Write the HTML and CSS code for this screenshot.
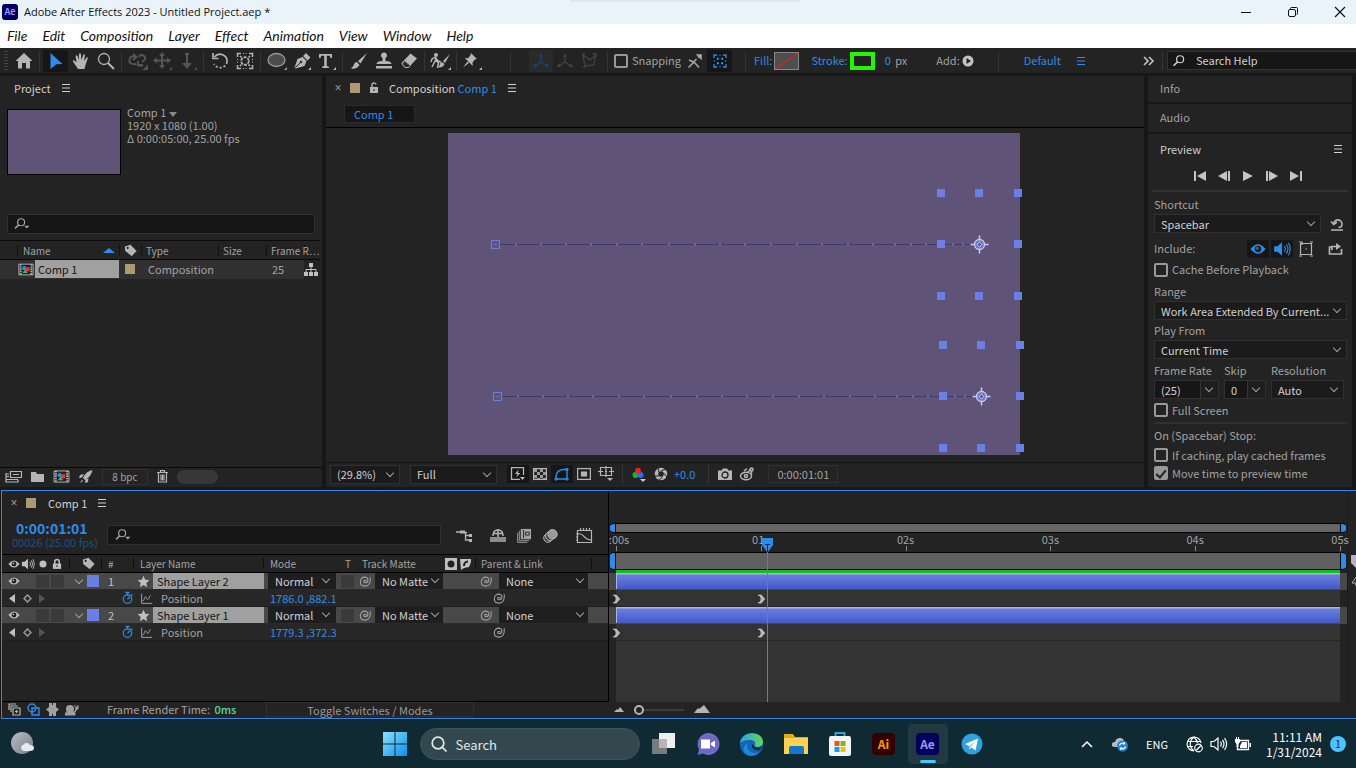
FILE: index.html
```html
<!DOCTYPE html>
<html lang="en">
<head>
<meta charset="utf-8">
<title>Adobe After Effects 2023 - Untitled Project.aep *</title>
<link rel="stylesheet" href="styles.css">
</head>
<body>
<svg class="sprite" aria-hidden="true">
  <symbol id="menu" viewBox="0 0 16 16"><path d="M4 4.500h8M4 8h8M4 11.500h8" stroke="currentColor" stroke-width="1.2"/></symbol>
  <symbol id="lens" viewBox="0 0 20 16"><circle cx="9" cy="6" r="4" fill="none" stroke="currentColor" stroke-width="1.4"/><path d="M6 9L1.500 13.500" stroke="currentColor" stroke-width="1.800"/></symbol>
  <symbol id="lensdrop" viewBox="0 0 20 16"><circle cx="9" cy="6" r="4" fill="none" stroke="currentColor" stroke-width="1.4"/><path d="M6.300 9L2 13" stroke="currentColor" stroke-width="1.600"/><path d="M12.500 10h6l-3 3z" fill="currentColor"/></symbol>
  <symbol id="eye" viewBox="0 0 16 16"><path d="M.5 8Q8-1.500 15.500 8 8 17.500.5 8z" fill="currentColor"/><circle cx="8" cy="8" r="3.300" fill="#222"/><circle cx="7.200" cy="7.200" r="1.100" fill="currentColor"/></symbol>
  <symbol id="sound" viewBox="0 0 16 16"><path d="M1 5.500h3l4-3.500v12l-4-3.500H1z" fill="currentColor"/><path d="M10 5.500q2 2.500 0 5M11.800 3.800q3 4.200 0 8.400M13.700 2.500q3.200 5.500 0 11" fill="none" stroke="currentColor"/></symbol>
  <symbol id="lock" viewBox="0 0 16 16"><path d="M2.500 7.500h11V14.500h-11z" fill="currentColor"/><path d="M5 8V5a3 3 0 0 1 6 0v3" fill="none" stroke="currentColor" stroke-width="2"/><path d="M8 9.500v2.500" stroke="#222" stroke-width="1.500"/></symbol>
  <symbol id="tag" viewBox="0 0 16 16"><path d="M1 3l7-2 7.500 7.500-6 6.500L1.500 8.500z" fill="currentColor"/><circle cx="4.500" cy="4.800" r="1.300" fill="#222"/></symbol>
  <symbol id="star" viewBox="0 0 16 16"><path d="M8 1l2.100 4.800 5.200.5-3.900 3.500 1.100 5.200L8 12.300 3.500 15l1.100-5.200L.7 6.300l5.200-.5z" fill="currentColor"/></symbol>
  <symbol id="whip" viewBox="0 0 16 16"><path d="M8.800 8a1.500 1.500 0 1 0-1.500 1.500c2.500 0 3.700-1.500 3.700-3.400S9.200 2.600 6.800 2.600 1.600 4.800 1.600 8.300s2.500 5.400 5.600 5.400c4.800 0 7.600-4.300 6.500-11" fill="none" stroke="currentColor" stroke-width="1.300"/></symbol>
  <symbol id="watch" viewBox="0 0 16 16"><circle cx="8" cy="9.300" r="5.200" fill="none" stroke="currentColor" stroke-width="1.500"/><path d="M5.500 1.200h5M8 1.500v3M12 3.500l2 2M8 9.500l3-3" stroke="currentColor" stroke-width="1.600"/></symbol>
  <symbol id="graph" viewBox="0 0 16 16"><path d="M2 2v12h13M3 11c3 0 2-6 4-5s1 4 3 3 1-4 3-5" fill="none" stroke="currentColor" stroke-width="1.200"/></symbol>
  <symbol id="comp" viewBox="0 0 18 14"><path d="M1 1h16v12H1z" fill="#222" stroke="#bbb"/><path d="M3 1v12M15 1v12" stroke="#bbb" stroke-width="2" stroke-dasharray="1.500 1"/><circle cx="7" cy="5.500" r="2.300" fill="#2d8ceb"/><path d="M8.500 4.500H13V9H8.500z" fill="#e23b36"/><path d="M8 7l3 4H5z" fill="#46b45a"/></symbol>
  <symbol id="key" viewBox="0 0 10 12"><path d="M0 1.500Q1.500 0 5 1l4.500 5L5 11q-3.500 1-5-.5 4-1 4-4.500T0 1.500z" fill="#b9b9b9"/></symbol>
  <symbol id="axis" viewBox="0 0 24 20"><path d="M12 3v8l-7 5M12 11l7 5" fill="none" stroke="currentColor" stroke-width="1.500"/><path d="M12 1l2.500 4h-5zM2 17.500l3-5 2.300 4zM22 17.500l-3-5-2.300 4z" fill="currentColor"/></symbol>
  <symbol id="film" viewBox="0 0 16 16"><path d="M4 1h11v11H4z" fill="currentColor"/><path d="M2.500 3v10.500H13M.7 5v10.300H11" fill="none" stroke="currentColor"/><path d="M7 2v9M9 4.500h4v3H9z" stroke="#222" fill="none"/></symbol>
</svg>

<header class="titlebar">
  <span class="ae-logo small">Ae</span>
  <h1>Adobe After Effects 2023 - Untitled Project.aep *</h1>
  <span class="title-shade"></span>
  <div class="window-buttons">
    <button aria-label="Minimize"><svg width="12" height="12"><path d="M1 6.500h10" stroke="#111"/></svg></button>
    <button aria-label="Restore"><svg width="12" height="12" fill="none" stroke="#111"><rect x="1.500" y="3.500" width="7" height="7" rx="1.500"/><path d="M3.500 3V2.500q0-1 1-1h5q1 0 1 1v5q0 1-1 1"/></svg></button>
    <button aria-label="Close"><svg width="12" height="12"><path d="M1 1l10 10M11 1L1 11" stroke="#111" stroke-width="1.200"/></svg></button>
  </div>
</header>

<nav class="menubar">
  <a href="#">File</a><a href="#">Edit</a><a href="#">Composition</a><a href="#">Layer</a><a href="#">Effect</a><a href="#">Animation</a><a href="#">View</a><a href="#">Window</a><a href="#">Help</a>
</nav>

<div class="toolbar">
  <span class="grip"></span>
  <button class="tool" aria-label="Home"><svg width="18" height="17"><path d="M9 1l8.500 8H15v7.500h-4V11H7v5.500H3V9H.5z" fill="#b5b5b5"/></svg></button>
  <i class="sep"></i>
  <button class="tool on" aria-label="Selection tool"><svg width="14" height="18"><path d="M1.500 1l12 11-6 .3L1.500 17z" fill="#2d8ceb"/></svg></button>
  <button class="tool" aria-label="Hand tool"><svg width="18" height="18"><path d="M6 17L2 11Q0 8.500 1.500 8l3 2.300L3.500 4Q4.500 2.500 5.500 4l1.300 4L7 2q1-1.500 2 0l.3 6L11.500 2.500q1.300-.8 1.500.8L12 9l2.500-3.500q1.500-.5 1.300.8L13.500 13 12.500 17z" fill="#b5b5b5"/></svg></button>
  <button class="tool" aria-label="Zoom tool"><svg width="18" height="18" fill="none" stroke="#b5b5b5"><circle cx="7" cy="7" r="5.500" stroke-width="1.300"/><path d="M11 11l6 6" stroke-width="2"/></svg></button>
  <i class="sep"></i>
  <button class="tool" aria-label="Orbit"><svg width="20" height="18" fill="none" stroke="#555" stroke-width="2"><path d="M8 12Q1 13 1.500 8T8 5M5 2l3.500 3L5 8M11 5q2-4 5-1t-2 6M15 13q-4 2-6-1M10 9v4h4M16 18h3v-3z"/></svg></button>
  <button class="tool" aria-label="Pan camera"><svg width="20" height="18"><path d="M9 1v15M1 8.500h16" stroke="#555" stroke-width="2"/><path d="M9 0l3 4H6zM9 17l3-4H6zM0 8.500l4-3v6zM18 8.500l-4-3v6zM16 18l3-3v3z" fill="#555"/></svg></button>
  <button class="tool" aria-label="Dolly"><svg width="20" height="18"><path d="M9 1v13M7 2h4" stroke="#555" stroke-width="2"/><path d="M4 11h10l-5 6zM16 18l3-3v3z" fill="#555"/></svg></button>
  <i class="sep"></i>
  <button class="tool" aria-label="Rotation tool"><svg width="18" height="18" fill="none" stroke="#b5b5b5"><path d="M3.500 5a7 7 0 0 1 12.500 5" stroke-width="1.700"/><path d="M16 10a7 7 0 0 1-13 2" stroke-width="1.700" stroke-dasharray="2 2"/><path d="M2 1v5.500h5.500" stroke-width="1.700"/></svg></button>
  <button class="tool" aria-label="Pan behind tool"><svg width="18" height="18" fill="none" stroke="#b5b5b5"><path d="M1.500 5V1.500H5M13 1.500h3.500V5M16.500 13v3.500H13M5 16.500H1.500V13" stroke-width="1.500"/><path d="M7 1.500h4M7 16.500h4M1.500 7v4M16.500 7v4" stroke-dasharray="1 1.500"/><circle cx="9" cy="9" r="3.800" stroke-dasharray="3 1" stroke-width="1.700"/><path d="M4 4l1.500 1.500M14 4l-1.500 1.500M4 14l1.500-1.500M14 14l-1.500-1.500" stroke-width="1.500"/></svg></button>
  <i class="sep"></i>
  <button class="tool" aria-label="Ellipse tool"><svg width="20" height="18"><ellipse cx="9.500" cy="8" rx="8.500" ry="6.500" fill="#4c4c4c" stroke="#999" stroke-width="1.300"/><path d="M17 18l3-3v3z" fill="#999"/></svg></button>
  <button class="tool" aria-label="Pen tool"><svg width="20" height="18"><path d="M2 17l3.500-10 5-2 4 4-2 5z" fill="#b5b5b5"/><path d="M11 4l3-3 4.500 4.500-3 3zM16 18l3-3v3z" fill="#b5b5b5"/><path d="M2 17l6-6" stroke="#232323"/><circle cx="9" cy="10" r="1.200" fill="#232323"/></svg></button>
  <button class="tool" aria-label="Type tool"><svg width="20" height="18"><path d="M2 2h13v4h-1.500l-.7-2.300H9.800V14l2 .5V16H5.200v-1.500l2-.5V3.700H4.200L3.500 6H2zM16 18l3-3v3z" fill="#b5b5b5"/></svg></button>
  <i class="sep"></i>
  <button class="tool" aria-label="Brush tool"><svg width="18" height="18" fill="#b5b5b5"><path d="M17 1L8 9l2.500 2.500zM7 10l2.500 3Q7 17.500 1 16.500 4 14.500 4 12q1-2 3-2z"/></svg></button>
  <button class="tool" aria-label="Clone stamp tool"><svg width="18" height="18" fill="#b5b5b5"><path d="M7.500 6a3 3 0 1 1 3 0L10.500 9q6 0 6 3h-15q0-3 6-3zM1 14h16v2.500H1z"/></svg></button>
  <button class="tool" aria-label="Eraser tool"><svg width="18" height="18"><path d="M1.500 11l9-9.500L17 6.500 8 16H5z" fill="#b5b5b5"/><path d="M4.500 8.500l6 5-2 2L5 15.500 2 12z" fill="#2a2a2a" stroke="#b5b5b5"/></svg></button>
  <i class="sep"></i>
  <button class="tool" aria-label="Roto brush tool"><svg width="21" height="18" fill="#b5b5b5"><circle cx="6" cy="3" r="2"/><path d="M5 5l3 4 3 1M5 5L2 7l-1 3M5.500 8l3 3-1 5M5 9l-3 6M5.500 5v5" fill="none" stroke="#b5b5b5" stroke-width="1.500"/><path d="M20 2l-7 7 2 2zM12 10l2.500 2Q13 16 8 15.500q2-2 2-4zM18 18l3-3v3z"/></svg></button>
  <i class="sep"></i>
  <button class="tool" aria-label="Puppet pin tool"><svg width="21" height="18" fill="#b5b5b5"><path d="M9 1l6 6-2 .5-2.500 3 .3 3.500-8-8 3.400.3L8.500 3zM5.500 9.500L1 15.500l6-4.500zM17 18l3-3v3z"/></svg></button>
  <i class="sep wide"></i>
  <span class="axes">
    <button class="tool axis-on" aria-label="Local axis"><svg width="20" height="18"><use href="#axis"/></svg></button>
    <button class="tool" aria-label="World axis"><svg width="20" height="18"><use href="#axis"/></svg></button>
    <button class="tool" aria-label="View axis"><svg width="16" height="16" fill="none" stroke="#444" stroke-width="1.300"><path d="M2 2l2 11 9-1 1-9-5 4zM1 1h3M12 1h3v3M2 14h3"/></svg></button>
  </span>
  <i class="sep"></i>
  <label class="check snap"><input type="checkbox"><span>Snapping</span></label>
  <button class="tool" aria-label="Snap edges"><svg width="16" height="16" fill="none" stroke="#aaa" stroke-width="1.500"><path d="M1.500 14.500L7 9l5 5.500M2 7l4.500 2L9.500 6M11 4.500l1-1"/><path d="M10.500 2h3.500v3.500z" fill="#aaa"/></svg></button>
  <button class="tool on" aria-label="Snap bounds"><svg width="14" height="14" fill="none" stroke="#2d8ceb" stroke-width="1.300"><path d="M1 4V1h3M10 1h3v3M13 10v3h-3M4 13H1v-3M4.500 6V4.500H6M8 4.500h1.500V6M9.500 8v1.500H8M6 9.500H4.500V8M7 1v1M7 12v1M1 7h1M12 7h1"/></svg></button>
  <i class="sep gap"></i>
  <a href="#" class="blue">Fill:</a>
  <button class="swatch none" aria-label="Fill colour"><svg width="23" height="16"><path d="M0 16L23 0" stroke="#d22" stroke-width="1.200"/></svg></button>
  <a href="#" class="blue stroke-link">Stroke:</a>
  <button class="swatch green" aria-label="Stroke colour"></button>
  <span class="px"><b>0</b> px</span>
  <span class="add">Add:</span>
  <button class="plain" aria-label="Add"><svg width="12" height="12"><circle cx="6" cy="6" r="5.500" fill="#c4c4c4"/><path d="M4.500 3L9 6 4.500 9z" fill="#222"/></svg></button>
  <i class="sep far"></i>
  <a href="#" class="blue default">Default</a>
  <button class="plain blue" aria-label="Workspace menu"><svg width="16" height="16"><use href="#menu"/></svg></button>
  <span class="grow"></span>
  <button class="plain more" aria-label="More workspaces"><svg width="12" height="10" fill="none" stroke="#c4c4c4" stroke-width="1.600"><path d="M1 1l4 4-4 4M6 1l4 4-4 4"/></svg></button>
  <i class="sep"></i>
  <label class="help-search"><svg width="18" height="14"><use href="#lens"/></svg><input type="text" value="Search Help" aria-label="Search Help"></label>
</div>

<main class="workspace">
  <section class="panel project">
    <div class="tabs"><span>Project</span><button class="plain" aria-label="Panel menu"><svg width="16" height="16"><use href="#menu"/></svg></button></div>
    <div class="asset">
      <div class="thumb"></div>
      <div class="facts"><strong>Comp 1 <i class="tri"></i></strong><span>1920 x 1080 (1.00)</span><span>Δ 0:00:05:00, 25.00 fps</span></div>
    </div>
    <label class="field project-search"><svg width="20" height="14"><use href="#lensdrop"/></svg><input type="text" aria-label="Search project"></label>
    <table class="files">
      <colgroup><col class="f-name"><col class="f-tag"><col class="f-type"><col class="f-size"><col class="f-rate"><col></colgroup>
      <thead><tr><th><div class="name-head">Name<i class="up"></i></div></th><th><svg class="tagico" width="13" height="13"><use href="#tag"/></svg></th><th>Type</th><th>Size</th><th>Frame R…</th><th></th></tr></thead>
      <tbody><tr><td><div class="file-name"><svg width="16" height="13"><use href="#comp"/></svg><span>Comp 1</span></div></td><td><i class="sand"></i></td><td class="wide-text">Composition</td><td></td><td class="rate">25</td><td class="tree"><svg width="14" height="13" fill="#c0c0c0"><path d="M5 0h4v4H5zM0 9h4v4H0zM5 9h4v4H5zM10 9h4v4h-4z"/><path d="M7 4v5M2 9V6.500h10V9" fill="none" stroke="#c0c0c0"/></svg></td></tr></tbody>
    </table>
    <div class="project-foot">
      <button class="plain" aria-label="Interpret footage"><svg width="17" height="13" fill="none" stroke="#b5b5b5" stroke-width="1.200"><path d="M5.500 1.500h11v6h-11zM8 4.500h6M1 3v9h12v-2.500" /><path d="M1 4h3M1 6.500h3M1 9.500h12" /></svg></button>
      <button class="plain" aria-label="New folder"><svg width="13" height="11"><path d="M0 1h5l1 2h7v8H0z" fill="#b5b5b5"/></svg></button>
      <button class="plain" aria-label="New composition"><svg width="17" height="13"><use href="#comp"/></svg></button>
      <button class="plain" aria-label="Project settings"><svg width="14" height="13"><path d="M13.500 0Q7 1 4 8l2 2q6-3 7.500-10zM5 4L1 5 0 8l3-.5zM9.500 8.500L9 12l-3 1 .5-3.500zM3 9.500L1 13l3-2z" fill="#b5b5b5"/></svg></button>
      <button class="bpc">8 bpc</button>
      <button class="plain" aria-label="Delete"><svg width="11" height="13" fill="none" stroke="#b5b5b5" stroke-width="1.200"><path d="M0 2.500h11M3.500 2V.6h4V2M1.500 3v9h8V3M4 4.500v6M5.500 4.500v6M7 4.500v6"/></svg></button>
      <span class="pill"></span>
    </div>
  </section>

  <section class="panel viewer">
    <div class="tabs">
      <button class="plain x" aria-label="Close tab">×</button><i class="sand"></i>
      <svg width="11" height="12"><path d="M1 5h8v6H1z" fill="#b5b5b5"/><path d="M3 5V3.500a2 2 0 0 1 4-1" fill="none" stroke="#b5b5b5" stroke-width="1.400"/><path d="M5 7v2" stroke="#232323"/></svg>
      <span>Composition <a href="#" class="blue">Comp 1</a></span>
      <button class="plain" aria-label="Panel menu"><svg width="16" height="16"><use href="#menu"/></svg></button>
    </div>
    <div class="crumbs"><button>Comp 1</button></div>
    <div class="stage">
      <svg class="canvas" width="572" height="322" viewBox="0 0 572 322" role="img" aria-label="Composition canvas">
        <defs>
          <g id="handles" fill="#6b7fe6"><path d="M-4-4h8v8h-8zM34-4h8v8h-8zM73-4h8v8h-8zM-4 47h8v8h-8zM73 47h8v8h-8zM-4 99h8v8h-8zM34 99h8v8h-8zM73 99h8v8h-8z"/></g>
          <g id="path" fill="none" stroke="#6b7fe6"><path d="M4 0H480" stroke="#3f3c6a"/><path d="M20 0h1M45 0h1M70 0h1M95 0h1M121 0h1M146 0h1M173 0h1M199 0h1M224 0h1M249 0h1M275 0h1M301 0h1M326 0h1M352 0h1M377 0h1M399 0h1M415 0h1M430 0h1M444 0h1M457 0h1M467 0h1" stroke="#8c98f0" stroke-width="2"/><path d="M-4-4h8v8h-8z"/><path d="M-1 0h2"/></g>
          <g id="anchor" fill="none" stroke="#c7cdf5"><circle r="5" stroke-width="1.300"/><circle r="2"/><path d="M0-9v5M0 9V4M-9 0h5M9 0H4" stroke-width="1.500"/><path d="M-3-3h6v6h-6z" stroke="#6b7fe6"/></g>
        </defs>
        <rect width="572" height="322" fill="#605378"/>
        <use href="#path" x="47.500" y="111.500"/><use href="#path" x="49.500" y="263.500"/>
        <use href="#handles" x="493" y="60"/><use href="#handles" x="495" y="212"/>
        <use href="#anchor" x="531.500" y="111.500"/><use href="#anchor" x="533.500" y="263.500"/>
      </svg>
    </div>
    <div class="viewer-foot">
      <span class="pick zoompick"><select aria-label="Magnification"><option>(29.8%)</option></select></span>
      <span class="pick fullpick"><select aria-label="Resolution"><option>Full</option></select></span>
      <div class="view-icons">
        <button class="mini on" aria-label="Fast previews"><svg width="16" height="16" fill="none" stroke="#b5b5b5" stroke-width="1.300"><path d="M10 13.300H1.500V1.700h12V9"/><path d="M8.500 3.500L5 8h2.500L6 11.500 10.500 7H8zM10 11h5l-2.500 3z" fill="#b5b5b5" stroke="none"/></svg></button>
        <button class="mini" aria-label="Transparency grid"><svg width="14" height="12"><rect x=".6" y=".6" width="12.800" height="10.800" fill="none" stroke="#b5b5b5" stroke-width="1.200"/><path d="M1 1h3v3H1zM7 1h3v3H7zM4 4h3v3H4zM10 4h3v3h-3zM1 7h3v3H1zM7 7h3v3H7zM4 10h3v1H4zM10 10h3v1h-3z" fill="#999"/></svg></button>
        <button class="mini on" aria-label="Mask visibility"><svg width="16" height="14" fill="none" stroke="#2d8ceb" stroke-width="1.400"><path d="M2 12V9Q3 3 9 2.500h4V12z"/><path d="M1 11h2v2H1zM12 11h2v2h-2zM12 1.500h2v2h-2z" stroke-width="1"/></svg></button>
        <button class="mini" aria-label="Region of interest"><svg width="14" height="12"><rect x=".6" y=".6" width="12.800" height="10.800" fill="none" stroke="#b5b5b5" stroke-width="1.200"/><path d="M4 3.500h6v5H4z" fill="#b5b5b5"/></svg></button>
        <button class="mini" aria-label="Guides"><svg width="16" height="16" fill="none" stroke="#b5b5b5" stroke-width="1.200"><path d="M2.500 1.500h11v8h-11zM8 0v11M0 5.500h5M7 5.500h2M11 5.500h5"/><path d="M9 12h6l-3 3z" fill="#b5b5b5" stroke="none"/></svg></button>
      </div>
      <i class="sep"></i>
      <div class="view-icons second">
        <button class="mini" aria-label="Channels"><svg width="16" height="16"><circle cx="4.500" cy="9" r="3" fill="#1b2"/><circle cx="9.500" cy="9" r="3" fill="#36f"/><circle cx="7" cy="4.800" r="3" fill="#e22"/><path d="M9 13h6l-3 3z" fill="#ccc"/></svg></button>
        <button class="mini" aria-label="Reset exposure"><svg width="14" height="14"><circle cx="7" cy="7" r="4.500" fill="none" stroke="#b5b5b5" stroke-width="3.500"/><path d="M7 4l5-2M9.500 6l3.500 4M8.500 10L5 13M5 9L1 9M5 5L4 1" stroke="#232323"/></svg></button>
        <a href="#" class="blue">+0.0</a>
      </div>
      <i class="sep"></i>
      <div class="view-icons third">
        <button class="mini" aria-label="Snapshot"><svg width="14" height="12"><path d="M0 2.500h3.500L5 .5h4l1.500 2H14V12H0z" fill="#b5b5b5"/><circle cx="7" cy="7" r="3" fill="none" stroke="#232323" stroke-width="1.300"/></svg></button>
        <button class="mini" aria-label="Show snapshot"><svg width="16" height="14" fill="none" stroke="#b5b5b5" stroke-width="1.500"><ellipse cx="7" cy="9" rx="5.500" ry="3.700"/><circle cx="7" cy="9" r="1.500"/><path d="M5 4l3-2.500M9 5l3-3M12.500 7V4"/><circle cx="12.500" cy="2.500" r="1.500"/></svg></button>
      </div>
      <button class="timecode">0:00:01:01</button>
    </div>
  </section>

  <section class="panel side">
    <h2 class="fold">Info</h2>
    <h2 class="fold">Audio</h2>
    <div class="tabs"><span>Preview</span><button class="plain" aria-label="Panel menu"><svg width="16" height="16"><use href="#menu"/></svg></button></div>
    <div class="transport">
      <button class="plain" aria-label="First frame"><svg width="12" height="10" fill="#c4c4c4"><path d="M0 0h2v10H0zM12 0v10L3 5z"/></svg></button>
      <button class="plain" aria-label="Previous frame"><svg width="12" height="10" fill="#c4c4c4"><path d="M10 0h2v10h-2zM9 0v10L0 5z"/></svg></button>
      <button class="plain" aria-label="Play"><svg width="12" height="10" fill="#c4c4c4"><path d="M1 0v10l10-5z"/></svg></button>
      <button class="plain" aria-label="Next frame"><svg width="12" height="10" fill="#c4c4c4"><path d="M0 0h2v10H0zM3 0v10l9-5z"/></svg></button>
      <button class="plain" aria-label="Last frame"><svg width="12" height="10" fill="#c4c4c4"><path d="M10 0h2v10h-2zM0 0v10l9-5z"/></svg></button>
    </div>
    <div class="form">
      <label for="shortcut">Shortcut</label>
      <div class="line"><span class="pick"><select id="shortcut"><option>Spacebar</option></select></span><button class="plain end" aria-label="Reset"><svg width="14" height="14" fill="none" stroke="#b5b5b5" stroke-width="1.600"><path d="M8.500 10.300h2a4.200 4.200 0 1 0-6.800-4M1 4.500l2.700 3L7 5M1 13h12"/></svg></button></div>
      <div class="line include"><span>Include:</span><button class="mini on blue" aria-label="Video"><svg width="16" height="16"><use href="#eye"/></svg></button><button class="mini on blue" aria-label="Audio"><svg width="18" height="18"><use href="#sound"/></svg></button><button class="mini" aria-label="Overlays"><svg width="16" height="16" fill="none" stroke="#b5b5b5" stroke-width="1.200"><path d="M2.500 2.500h11v11h-11zM7.500 8h1.500M1 1h3v3M12 1h3M1 15h3M12 15h3"/></svg></button><button class="mini loop" aria-label="Loop"><svg width="16" height="14" fill="none" stroke="#b5b5b5" stroke-width="1.700"><path d="M4 5H1.500v7h12V7M4 8V4.500h5"/><path d="M8 1l5 3.500L8 8z" fill="#b5b5b5" stroke="none"/></svg></button></div>
      <label class="check cache"><input type="checkbox"><span>Cache Before Playback</span></label>
      <label for="range" class="range-label">Range</label>
      <div class="line"><span class="pick"><select id="range"><option>Work Area Extended By Current...</option></select></span></div>
      <label for="from" class="from-label">Play From</label>
      <div class="line"><span class="pick"><select id="from"><option>Current Time</option></select></span></div>
      <div class="trio">
        <label for="rate">Frame Rate</label><label for="skip">Skip</label><label for="res">Resolution</label>
        <span class="pick split"><select id="rate"><option>(25)</option></select></span><span class="pick split"><select id="skip"><option>0</option></select></span><span class="pick"><select id="res"><option>Auto</option></select></span>
      </div>
      <label class="check full"><input type="checkbox"><span>Full Screen</span></label>
      <hr>
      <p>On (Spacebar) Stop:</p>
      <label class="check"><input type="checkbox"><span>If caching, play cached frames</span></label>
      <label class="check"><input type="checkbox" checked><span>Move time to preview time</span></label>
    </div>
  </section>
</main>

<section class="timeline">
  <div class="tl-left">
    <div class="tabs"><button class="plain x" aria-label="Close tab">×</button><i class="sand"></i><span>Comp 1</span><button class="plain" aria-label="Panel menu"><svg width="16" height="16"><use href="#menu"/></svg></button></div>
    <div class="tl-tools">
      <div class="now"><strong>0:00:01:01</strong><span>00026 (25.00 fps)</span></div>
      <label class="field tl-search"><svg width="20" height="14"><use href="#lensdrop"/></svg><input type="text" aria-label="Search layers"></label>
      <div class="switches">
        <button class="plain" aria-label="Mini flowchart"><svg width="17" height="14" fill="none" stroke="#b5b5b5" stroke-width="1.300"><path d="M0 3h7M8 3.500h3M9.500 3.500V11h5M10 6.500h5"/><path d="M4 1.500h5v3H4zM13 5h3v3h-3zM13 10h3v3h-3z" fill="#b5b5b5" stroke="none"/></svg></button>
        <button class="plain" aria-label="Hide shy layers"><svg width="16" height="14"><path d="M3 7q0-6 5-6t5 6M8 0v8M4 4.500h8" fill="none" stroke="#b5b5b5" stroke-width="1.500"/><path d="M0 8h16v5H0z" fill="#8c8c8c"/></svg></button>
        <button class="plain" aria-label="Frame blending"><svg width="15" height="15"><use href="#film"/></svg></button>
        <button class="plain" aria-label="Motion blur"><svg width="15" height="14" fill="#444" stroke="#b5b5b5"><circle cx="5" cy="9" r="4.300"/><circle cx="7" cy="7" r="4.500"/><circle cx="9.500" cy="5.300" r="4.700" fill="#999"/></svg></button>
        <button class="plain graphbtn" aria-label="Graph editor"><svg width="17" height="16" fill="none" stroke="#b5b5b5" stroke-width="1.200"><path d="M1.500 2.500h14v12h-14zM2 6c6-2 5 6 13 6M4.500 0v2M7.500 0v2M10.500 0v2M13.500 0v2M0 6h2M0 9h2M0 12h2"/></svg></button>
      </div>
    </div>
    <table class="layers">
      <colgroup><col class="c-av"><col class="c-tag"><col class="c-num"><col class="c-name"><col class="c-mode"><col class="c-t"><col class="c-matte"><col class="c-mask"><col class="c-parent"><col></colgroup>
      <thead><tr>
        <th><div class="av"><svg width="12" height="12"><use href="#eye"/></svg><svg width="14" height="14"><use href="#sound"/></svg><svg width="12" height="12"><circle cx="6" cy="6" r="3.500" fill="currentColor"/></svg><svg width="12" height="12"><use href="#lock"/></svg></div></th>
        <th><svg class="tagico" width="13" height="13"><use href="#tag"/></svg></th><th>#</th><th>Layer Name</th><th>Mode</th><th>T</th><th>Track Matte</th>
        <th><div class="masks"><svg width="12" height="12"><path d="M0 0h12v12H0z" fill="#c0c0c0"/><circle cx="6" cy="6" r="3.500" fill="#222"/></svg><svg width="12" height="12"><path d="M0 1h11v3L9 9l-5 1-3 2z" fill="#c0c0c0"/><path d="M4 8Q4 4 8 3.500" stroke="#222" stroke-width="2" fill="none"/></svg></div></th><th>Parent &amp; Link</th><th></th>
      </tr></thead>
      <tbody>
        <tr class="layer">
          <td><div class="av"><svg width="12" height="12"><use href="#eye"/></svg><i></i><i class="cell"></i><i class="cell"></i></div></td>
          <td><div class="color"><i class="chev"></i><i class="chip"></i></div></td><td>1</td>
          <td><div class="lname"><svg width="13" height="13"><use href="#star"/></svg><span>Shape Layer 2</span></div></td>
          <td><span class="pick"><select aria-label="Mode"><option>Normal</option></select></span></td><td><i class="cell"></i></td>
          <td><div class="link"><svg width="13" height="13"><use href="#whip"/></svg><span class="pick"><select aria-label="Track matte"><option>No Matte</option></select></span></div></td><td></td>
          <td colspan="2"><div class="link parent"><svg width="13" height="13"><use href="#whip"/></svg><span class="pick"><select aria-label="Parent"><option>None</option></select></span></div></td>
        </tr>
        <tr class="prop">
          <td colspan="3"><div class="nav"><svg width="7" height="9"><path d="M6 0v9L0 4.500z" fill="#c0c0c0"/></svg><svg width="9" height="9"><path d="M4.500 1L8 4.500 4.500 8 1 4.500z" fill="none" stroke="#999" stroke-width="1.500"/></svg><svg width="7" height="9"><path d="M0 0v9l6-4.500z" fill="#555"/></svg><svg class="blue sw" width="13" height="14"><use href="#watch"/></svg></div></td>
          <td><div class="pname"><svg width="13" height="13"><use href="#graph"/></svg><span>Position</span></div></td>
          <td colspan="4"><a href="#" class="blue">1786.0 ,882.1</a></td>
          <td colspan="2"><svg class="pw" width="13" height="13"><use href="#whip"/></svg></td>
        </tr>
        <tr class="layer">
          <td><div class="av"><svg width="12" height="12"><use href="#eye"/></svg><i></i><i class="cell"></i><i class="cell"></i></div></td>
          <td><div class="color"><i class="chev"></i><i class="chip"></i></div></td><td>2</td>
          <td><div class="lname"><svg width="13" height="13"><use href="#star"/></svg><span>Shape Layer 1</span></div></td>
          <td><span class="pick"><select aria-label="Mode"><option>Normal</option></select></span></td><td><i class="cell"></i></td>
          <td><div class="link"><svg width="13" height="13"><use href="#whip"/></svg><span class="pick"><select aria-label="Track matte"><option>No Matte</option></select></span></div></td><td></td>
          <td colspan="2"><div class="link parent"><svg width="13" height="13"><use href="#whip"/></svg><span class="pick"><select aria-label="Parent"><option>None</option></select></span></div></td>
        </tr>
        <tr class="prop">
          <td colspan="3"><div class="nav"><svg width="7" height="9"><path d="M6 0v9L0 4.500z" fill="#c0c0c0"/></svg><svg width="9" height="9"><path d="M4.500 1L8 4.500 4.500 8 1 4.500z" fill="none" stroke="#999" stroke-width="1.500"/></svg><svg width="7" height="9"><path d="M0 0v9l6-4.500z" fill="#555"/></svg><svg class="blue sw" width="13" height="14"><use href="#watch"/></svg></div></td>
          <td><div class="pname"><svg width="13" height="13"><use href="#graph"/></svg><span>Position</span></div></td>
          <td colspan="4"><a href="#" class="blue">1779.3 ,372.3</a></td>
          <td colspan="2"><svg class="pw" width="13" height="13"><use href="#whip"/></svg></td>
        </tr>
      </tbody>
    </table>
  </div>

  <div class="tl-right">
    <div class="navigator"><span></span></div>
    <div class="ruler"><div class="scale">
      <span style="left:0%"><em>0:00s</em></span><span style="left:20%"><em>01s</em></span><span style="left:40%"><em>02s</em></span><span style="left:60%"><em>03s</em></span><span style="left:80%"><em>04s</em></span><span style="left:100%"><em>05s</em></span>
    </div></div>
    <div class="workarea"><span></span></div>
    <div class="cached"><span></span></div>
    <div class="lanes">
      <div class="lane bar"><span></span></div>
      <div class="lane keys"><span><svg style="left:0%" width="9" height="10"><use href="#key"/></svg><svg style="left:20%" width="9" height="10"><use href="#key"/></svg></span></div>
      <div class="lane bar"><span></span></div>
      <div class="lane keys"><span><svg style="left:0%" width="9" height="10"><use href="#key"/></svg><svg style="left:20%" width="9" height="10"><use href="#key"/></svg></span></div>
      <div class="empty"><span></span></div>
    </div>
    <div class="overlay"><div class="playhead" style="left:20.8%"><svg width="13" height="14"><path d="M1 0h11v7l-5 7h-1L1 7z" fill="#2d8ceb"/><path d="M4 6.500h5M6.500 7v7" stroke="#123"/></svg></div></div>
  </div>
  <div class="tl-edge"><svg width="6" height="14"><path d="M0 0h6v14L0 8z" fill="#b5b5b5"/></svg><svg width="6" height="14" fill="none" stroke="#b5b5b5"><path d="M6 1L1 8h3M6 6a4 4 0 0 0 0 6"/></svg></div>

  <footer class="tl-foot">
    <button class="plain" aria-label="Layer switches"><svg width="13" height="13" fill="none" stroke="#b5b5b5" stroke-width="1.200"><path d="M5 5h7v7H5zM3 9V3h7M1 7V1h7M8.500 7v3M7 8.500h3"/></svg></button>
    <button class="plain" aria-label="Transfer controls"><svg width="13" height="13" fill="none" stroke="#2d8ceb" stroke-width="1.400"><circle cx="5" cy="5" r="4"/><path d="M5 5h7v7H5z"/></svg></button>
    <button class="plain" aria-label="In and out"><svg width="13" height="13"><path d="M3 0h3v2h1V0h3v13H7v-2H6v2H3zM0 6.500L3 4v5zM13 6.500L10 4v5z" fill="#a0a0a0"/></svg></button>
    <button class="plain" aria-label="Render time"><svg width="14" height="12"><circle cx="5" cy="5" r="4" fill="#a0a0a0"/><path d="M1 8h8q2-1 2-5h2v2h-1L9 9.500M0 9h10v2H0zM10 1v2M13 1v2" fill="#a0a0a0" stroke="#a0a0a0"/></svg></button>
    <span class="render">Frame Render Time: <b>0ms</b></span>
    <button class="toggle">Toggle Switches / Modes</button>
    <span class="zoom"><svg width="10" height="7"><path d="M0 6l3-3 1 1 2-3 4 5z" fill="#b5b5b5"/></svg><input type="range" min="0" max="100" value="0" aria-label="Timeline zoom"><svg width="16" height="9"><path d="M0 8l4-5 1 1 5-4 6 8z" fill="#b5b5b5"/></svg></span>
  </footer>
</section>

<footer class="taskbar">
  <button class="task weather" aria-label="Weather"><svg width="26" height="26"><defs><linearGradient id="moon" y2="1"><stop stop-color="#b9bdc7"/><stop offset="1" stop-color="#777d88"/></linearGradient></defs><circle cx="13" cy="12" r="11" fill="url(#moon)"/><path d="M13 19a3 3 0 0 1 1-5 4 4 0 0 1 7 0q4 0 4 3t-4 3h-6z" fill="#e8eaf0"/></svg></button>
  <div class="apps">
    <button class="task" aria-label="Start"><svg width="24" height="24"><defs><linearGradient id="win" x2="1" y2="1"><stop stop-color="#8fe0fb"/><stop offset="1" stop-color="#0a91ee"/></linearGradient></defs><path d="M0 0h11.500v11.500H0zM12.500 0H24v11.500H12.500zM0 12.500h11.500V24H0zM12.500 12.500H24V24H12.500z" fill="url(#win)"/></svg></button>
    <label class="win-search"><svg width="16" height="16" fill="none" stroke="#e4e8ea" stroke-width="1.700"><circle cx="7" cy="7" r="5.800"/><path d="M11 11l4.500 4.500"/></svg><input type="text" value="Search" aria-label="Search"></label>
    <button class="task" aria-label="Task view"><svg width="25" height="24"><path d="M8 1h16v15H8z" fill="#eee"/><path d="M1 7h15v15H1z" fill="#767b80"/><path d="M8 7h8v9H8z" fill="#b5b5b5"/></svg></button>
    <button class="task" aria-label="Chat"><svg width="24" height="24"><path d="M12 1a11 11 0 1 1-5 20.500L1.500 23 3 17.500A11 11 0 0 1 12 1z" fill="#6f69c6"/><path d="M5 7.500h9v9H5zM15 11l4-2.500v7L15 13z" fill="#fff"/></svg></button>
    <button class="task" aria-label="Edge"><svg width="25" height="25"><defs><linearGradient id="edge" x2="1"><stop stop-color="#2aa4e2"/><stop offset="1" stop-color="#5fd65c"/></linearGradient></defs><circle cx="12.500" cy="12.500" r="11.500" fill="#1065b4"/><path d="M1 12C1-2 24-2 24 10c0 5-6 6-8.500 4 2-3 0-6-4-6C6 8 2 9 1 12z" fill="url(#edge)"/><path d="M9 11c-3 7 4 12 11 9-3 4-9 5-13 2-4-4-3-9 2-11z" fill="#1b8bd6"/><path d="M15 14q3 3 8 0-1 5-6 4-5-1-4-6z" fill="#102a33"/></svg></button>
    <button class="task" aria-label="File Explorer"><svg width="26" height="24"><path d="M1 2h9l2 3h13v17H1z" fill="#e5a91f"/><path d="M1 6h24v16H1z" fill="#fcd255"/><path d="M6 22v-6q0-2 2-2h11q2 0 2 2v6z" fill="#1578cc"/></svg></button>
    <button class="task" aria-label="Store"><svg width="24" height="26"><path d="M7.500 6V2h9v4" fill="none" stroke="#25a5e0" stroke-width="2"/><rect x="1" y="5" width="22" height="20" rx="2" fill="#f3f5f7"/><path d="M6.500 10h5v5h-5z" fill="#f25022"/><path d="M12.500 10h5v5h-5z" fill="#7fba00"/><path d="M6.500 16h5v5h-5z" fill="#00a4ef"/><path d="M12.500 16h5v5h-5z" fill="#ffb900"/></svg></button>
    <button class="task" aria-label="Illustrator"><span class="ai-logo">Ai</span></button>
    <button class="task active" aria-label="After Effects"><span class="ae-logo">Ae</span></button>
    <button class="task" aria-label="Telegram"><svg width="22" height="22"><circle cx="11" cy="11" r="10.500" fill="#2fa1de"/><path d="M4 11l13-5.500-2.500 12-4-3-2 2-.5-3.500z" fill="#fff"/><path d="M8 13l6-4.500-4 5.500-1.500 2z" fill="#9cc9e6"/></svg></button>
  </div>
  <div class="tray">
    <svg class="caret" width="12" height="8" fill="none" stroke="#fff" stroke-width="1.500"><path d="M1 7l5-5 5 5"/></svg>
    <svg class="cloud" width="18" height="16"><path d="M4 11Q0 11 1 8q0-2 3-2 1-4 5-4t4 4q3 1 2 5z" fill="#b4bcc2"/><circle cx="11.500" cy="10" r="5.500" fill="#1784d8"/><path d="M8.500 9.500a3 3 0 0 1 5-1.500M14.500 10.500a3 3 0 0 1-5 1.500M13.500 6v2h-2M9.500 14v-2h2" fill="none" stroke="#fff" stroke-width="1.200"/></svg>
    <span class="lang">ENG</span>
    <span class="status">
    <svg width="18" height="17" fill="none" stroke="#fff" stroke-width="1.200"><path d="M15 7A7 7 0 1 0 8 15M8 1C3 5 3 11 8 15M8 1q3 3 3.500 6M1.500 5.500h13M1.500 10.500H7"/><circle cx="12.500" cy="12" r="3.800"/><path d="M10 14.500l5-5"/></svg>
    <svg width="18" height="16" fill="none" stroke="#fff" stroke-width="1.200"><path d="M1 5.500h3L8 2v12l-4-3.500H1zM10.500 5.500q1.700 2.500 0 5M12.500 3.800q3 4.200 0 8.400M14.500 2q4.300 6 0 12"/></svg>
    <svg width="18" height="15"><path d="M6 3.500h8.500v9h-11V9" fill="none" stroke="#fff" stroke-width="1.300"/><path d="M8 5h5v6H6V9zM15.500 6H17v4h-1.500zM1 2h1V0h1v2h1V0h1v2h1v3L4.500 7v3h-2V7L1 5z" fill="#fff"/></svg>
    </span>
    <time>11:11 AM<br>1/31/2024</time><span class="badge">1</span>
  </div>
</footer>
</body>
</html>
```
FILE: styles.css
```css
*, *::before, *::after { box-sizing: border-box; }
:root {
  --bg: #232323; --dark: #171717; --line: #0b0b0b; --edge: #333;
  --text: #a2a2a2; --bright: #d0d0d0; --blue: #2d8ceb;
}
html, body { margin: 0; min-height: 100%; }
body {
  display: flex; flex-direction: column; min-height: 100vh;
  background: var(--dark); color: var(--text);
  font: 11px/13px "Noto Sans CJK SC", "Noto Sans", sans-serif;
}
button, input, select { font: inherit; color: inherit; background: none; border: 0; padding: 0; margin: 0; border-radius: 0; }
input[type=text] { flex: 1; min-width: 0; width: 100%; outline: 0; }
a { color: inherit; text-decoration: none; }
svg { display: block; flex: none; }
i { font-style: normal; }
.sprite { position: absolute; width: 0; height: 0; }
.blue { color: var(--blue); }
.grow { flex: 1; }
.plain, .mini { display: flex; align-items: center; justify-content: center; flex: none; }
.sand { display: block; width: 10px; height: 10px; background: #ad9a74; flex: none; }

/* Title bar and menus */
.titlebar { display: flex; align-items: center; height: 24px; padding-left: 2px; background: #ebf3fa; color: #111; position: relative; }
.titlebar h1 { margin: 0 0 0 6px; font: 400 11px/16px "Open Sans", "Noto Sans", sans-serif; }
.title-shade { position: absolute; top: 0; left: 42%; right: 41%; height: 2px; background: #dfe6ee; }
.window-buttons { display: flex; margin-left: auto; }
.window-buttons button { display: flex; justify-content: center; width: 47px; }
.window-buttons button:last-child { padding-right: 15px; width: 63px; }
.window-buttons button:last-child { padding-right: 0; width: 33px; margin-left: 8px; }
.window-buttons button:nth-child(2) { margin-right: -1px; }
.ae-logo, .ai-logo { display: flex; align-items: center; justify-content: center; width: 23px; height: 22px; border-radius: 4px; background: #00005b; color: #9999ff; font: 700 12px/14px "Noto Sans CJK SC", sans-serif; }
.ai-logo { background: #330000; color: #ff9a00; }
.ae-logo.small { width: 16px; height: 16px; border-radius: 3px; font-size: 9px; }
.menubar { display: flex; align-items: center; gap: 15px; height: 24px; padding-left: 7px; background: #fff; color: #111; font: italic 14px/20px "Segoe Print", "Ink Free", Lato, sans-serif; }

/* Toolbar */
.toolbar { display: flex; align-items: center; height: 27px; background: var(--bg); border-bottom: 2px solid var(--dark); }
.grip { width: 4px; height: 20px; margin: 0 3px 0 4px; background: repeating-linear-gradient(#444 0 1px, transparent 1px 3px); }
.tool { display: flex; align-items: center; justify-content: center; width: 25px; height: 22px; flex: none; }
.tool.on, .mini.on { background: #161616; }
.sep { width: 7px; height: 20px; flex: none; background: linear-gradient(90deg, transparent 3px, #353535 3px 4px, transparent 4px); }
.sep.wide { margin: 0 15px 0 22px; }
.sep.gap { margin: 0 5px 0 10px; }
.sep.far { margin-left: 21px; }
.axes { display: flex; color: #444; padding-right: 3px; }
.axes .tool { width: 24px; }
.axes .axis-on { color: #1e4268; background: #2a2a2a; }
.check { display: flex; align-items: center; gap: 4px; }
.check input { appearance: none; width: 14px; height: 14px; border: 2px solid #999; border-radius: 2px; flex: none; display: grid; place-items: center; }
.check input:checked { background: #999; }
.check input:checked::before { content: ""; width: 6px; height: 10px; margin-bottom: 2px; border: solid #222; border-width: 0 2px 2px 0; transform: rotate(40deg); }
.snap { margin: 0 1px 0 3px; }
.swatch { width: 25px; height: 18px; margin-left: 2px; border: 1px solid #888; background: #4e4e4e; }
.swatch.green { border: 4px solid #22f600; background: #222; }
.stroke-link { margin-left: 12px; }
.px { margin-left: 10px; }
.px b { font-weight: 400; color: var(--blue); margin-right: 2px; }
.add { margin: 0 2px 0 29px; }
.default { margin: 0 12px 0 22px; }
.more { margin-right: 4px; }
.help-search { display: flex; align-items: center; gap: 6px; width: 189px; height: 19px; margin-left: 1px; padding-left: 4px; background: #161616; border: 1px solid var(--edge); border-right: 0; color: var(--bright); }

/* Panels */
.workspace { display: grid; grid-template-columns: 322px minmax(0, 1fr) 204px; gap: 4px; flex: 1; padding: 1px 4px 3px 0; }
.panel { display: flex; flex-direction: column; background: var(--bg); min-width: 0; }
.tabs { display: flex; align-items: center; gap: 7px; height: 26px; padding: 0 0 2px 14px; color: var(--bright); flex: none; }
.x { width: 10px; font: 12px/13px "Liberation Sans", sans-serif; color: #999; }
.asset { display: flex; gap: 6px; padding: 4px 0 0 7px; }
.thumb { width: 114px; height: 66px; margin-top: 3px; border: 1px solid #000; background: #605378; }
.facts { display: flex; flex-direction: column; line-height: 13px; }
.facts strong { font-weight: 400; }
.tri { display: inline-block; border: solid transparent; border-width: 5px 4px 0; border-top-color: #888; vertical-align: middle; }
.field { display: flex; align-items: center; height: 20px; background: #161616; border: 1px solid #303030; }
.project-search { margin: 39px 7px 6px; padding-left: 4px; }
.files { width: 320px; table-layout: fixed; border-collapse: collapse; border-top: 1px solid var(--line); }
.files th, .files td { height: 19px; padding: 0; font-weight: 400; text-align: left; white-space: nowrap; }
.files th { font-size: 10px; border-bottom: 1px solid var(--line); background: linear-gradient(90deg, #111 1px, transparent 1px) 0 4px / 100% 11px no-repeat; padding-left: 5px; }
.files th:first-child { background-position-x: 17px; padding-left: 23px; }
.files tbody { background: #303030; }
.f-name { width: 119px; } .f-tag { width: 22px; } .f-type { width: 77px; } .f-size { width: 48px; } .f-rate { width: 38px; }
.name-head { display: flex; align-items: center; justify-content: space-between; padding-right: 4px; }
.up { border: solid transparent; border-width: 0 6px 5px; border-bottom-color: var(--blue); }
.tagico { color: #b5b5b5; }
.file-name { display: flex; align-items: center; padding-left: 18px; gap: 1px; }
.file-name span { flex: 1; height: 18px; line-height: 18px; padding-left: 3px; background: #a0a0a0; color: #161616; }
.files td .sand { margin-left: 6px; }
.files td.wide-text { padding-left: 7px; }
.files td.rate { padding-left: 6px; }
.files td.tree { background: var(--bg); }
.project-foot { display: flex; align-items: center; gap: 9px; height: 20px; margin-top: auto; padding: 0 0 2px 5px; border-top: 1px solid var(--line); }
.bpc { width: 46px; height: 16px; border: 1px solid #303030; font-size: 10px; }
.pill { width: 41px; height: 14px; border-radius: 7px; background: #373737; }

/* Composition viewer */
.viewer .tabs { padding-left: 7px; }
.viewer .tabs > svg { margin: 0 2px; }
.crumbs { display: flex; align-items: center; height: 26px; padding: 0 0 1px 18px; border-bottom: 1px solid #000; }
.crumbs button { width: 71px; height: 18px; padding-left: 9px; text-align: left; background: #161616; border: 1px solid #2b2b2b; color: var(--blue); }
.stage { display: flex; flex: 1; justify-content: center; padding: 5px 2px 7px 0; border-bottom: 1px solid #111; }
.canvas { overflow: visible; }
.viewer-foot { display: flex; align-items: center; height: 24px; padding: 0 0 2px 4px; }
.pick { position: relative; display: flex; height: 19px; border: 1px solid #303030; background: #1b1b1b; color: var(--bright); min-width: 0; }
.pick select { appearance: none; width: 100%; height: 100%; padding: 0 15px 0 6px; outline: 0; line-height: 16px; text-overflow: clip; }
.pick::after, .chev { content: ""; width: 6px; height: 6px; border: solid #a0a0a0; border-width: 0 1px 1px 0; transform: rotate(45deg); }
.pick::after { position: absolute; right: 6px; top: 4px; pointer-events: none; }
.zoompick { width: 70px; margin-right: 10px; }
.fullpick { width: 87px; }
.mini { width: 22px; height: 18px; }
.view-icons { display: flex; align-items: center; padding: 0 2px 0 10px; }
.second { padding: 0 10px 0 2px; }
.second a { margin-left: 2px; }
.third { padding: 0 10px 0 2px; }
.timecode { width: 70px; height: 18px; border: 1px solid #303030; }

/* Info, Audio, Preview */
.fold { margin: 0; height: 30px; padding-left: 12px; font: inherit; line-height: 27px; border-bottom: 2px solid var(--dark); }
.fold:first-child { height: 28px; line-height: 25px; }
.side .tabs { padding: 0 6px 2px 12px; justify-content: space-between; height: 32px; }
.transport { display: flex; justify-content: center; gap: 12px; padding: 5px 5px 10px 0; margin: 0 4px; border-bottom: 2px solid #333; height: 26px; width: 196px; }
.form { display: grid; grid-template-columns: minmax(0, 1fr); padding: 6px 5px 2px 6px; align-content: start; }
.form p { margin: 0; }
.form .line { display: flex; align-items: center; height: 25px; }
.form .line .pick { flex: 1; }
.end { width: 26px; justify-content: flex-end; padding-right: 3px; }
.include { gap: 2px; }
.include > span { margin-right: auto; }
.loop { margin-left: 6px; }
.cache { height: 17px; }
.full { height: 18px; }
.range-label { margin-top: 7px; }
.from-label { margin-top: 1px; }
.trio { display: grid; grid-template-columns: 65px 42px 73px; column-gap: 5px; row-gap: 3px; padding-top: 2px; }
.split { background: linear-gradient(90deg, transparent calc(100% - 18px), #333 calc(100% - 18px) calc(100% - 17px), #1e1e1e calc(100% - 17px)), #161616; }
.trio + .full { margin-top: 2px; }
.form hr { width: 100%; margin: 3px 0 5px; border: 0; border-top: 2px solid #303030; }
.form p + .check { margin-top: 4px; }
.form p ~ .check { height: 18px; }

/* Timeline */
.timeline { display: grid; grid-template-columns: 607px minmax(0, 1fr) 9px; grid-template-rows: 1fr 16px; min-height: 229px; margin-left: 1px; margin-bottom: 1px; background: var(--bg); border: 1px solid var(--blue); border-right: 0; }
.timeline .tabs { padding-left: 7px; }
.tl-left { border-right: 1px solid #000; border-bottom: 1px solid #000; }
.tl-left .tabs span { margin-left: 5px; }
.tl-tools { display: flex; height: 37px; }
.now { display: flex; flex-direction: column; width: 105px; padding: 4px 0 0 10px; color: #204f86; white-space: nowrap; }
.now strong { padding-left: 4px; font-size: 14px; line-height: 15px; color: var(--blue); }
.tl-search { width: 334px; margin-top: 8px; padding-left: 5px; }
.switches { display: flex; align-items: center; gap: 11px; padding-left: 15px; }
.switches .plain:first-child { margin-right: 6px; }
.graphbtn { margin-left: 7px; }
.layers { width: 100%; table-layout: fixed; border-collapse: collapse; border-top: 1px solid #000; }
.layers th { height: 18px; font-size: 10px; border-bottom: 1px solid #000; background: linear-gradient(90deg, transparent calc(100% - 1px), #0e0e0e 0) 0 3px / 100% 11px no-repeat; }
.layers th, .layers td { padding: 0 0 0 6px; font-weight: 400; text-align: left; white-space: nowrap; line-height: 15px; }
.layers td { height: 17px; }
.layers th:nth-child(5), .layers th:nth-child(6), .layers th:nth-child(7), .layers th:last-child { background: none; }
.layers th:nth-child(2) { padding-left: 12px; }
.c-av { width: 68px; } .c-tag { width: 32px; } .c-num { width: 32px; } .c-name { width: 130px; } .c-mode { width: 75px; } .c-t { width: 17px; } .c-matte { width: 89px; } .c-mask { width: 31px; } .c-parent { width: 116px; }
.layers th:first-child, .layers td:first-child { padding-left: 4px; }
.layers tr > :nth-child(4) { padding-left: 6px; }
.av { display: grid; grid-template-columns: 15px 14px 15px 14px; align-items: center; justify-items: center; color: #c0c0c0; }
.layer { background: #484848; box-shadow: inset 0 -1px #2a2a2a; }
.layer .cell { display: block; width: 13px; height: 13px; background: #3a3a3a; }
.layer > td:nth-child(6) { padding-left: 2px; }
.layer .pick { height: 16px; border: 0; background: #1e1e1e; }
.layer > td:nth-child(5) { padding-left: 4px; padding-right: 3px; }
.layer .pick select { padding-left: 7px; line-height: 14px; }
.layer .pick::after { top: 3px; right: 7px; }
.color { display: flex; align-items: center; gap: 5px; }
.chev { display: block; margin-bottom: 3px; }
.layer > td:nth-child(2) { padding-left: 6px; }
.layer > td:nth-child(3) { color: #c0c0c0; }
.chip { width: 12px; height: 12px; background: #6b7fe3; }
.lname, .pname { display: flex; align-items: center; }
.layer > td:nth-child(4) { padding-left: 3px; }
.lname { gap: 3px; color: #c0c0c0; }
.lname span { flex: 1; height: 16px; line-height: 16px; padding-left: 4px; background: #a0a0a0; color: #161616; }
.layer > td:nth-child(7) { padding-left: 3px; }
.link { display: flex; align-items: center; gap: 3px; }
.link .pick { width: 68px; }
.layer .link .pick::after { right: 5px; }
.layer > td:nth-child(9) { padding-left: 4px; }
.parent { gap: 6px; }
.parent .pick { width: 89px; }
.prop { background: #272727; box-shadow: inset 0 -1px #1e1e1e; }
.prop td:nth-child(2) { padding-left: 6px; }
.prop td:nth-child(3) { padding-left: 6px; }
.nav { display: flex; align-items: center; gap: 7px; padding-left: 3px; }
.sw { margin-left: auto; }
.pname { gap: 8px; }
.pw { margin-left: 11px; }
.masks { display: flex; gap: 3px; }
.layers th:nth-child(8) { padding-left: 0; }
.layers th:nth-child(9) { padding-left: 5px; }

.tl-right { position: relative; display: flex; flex-direction: column; padding-top: 32px; clip-path: inset(0 -9px 0 0); }
.tl-right > div, .lane, .empty { padding: 0 7px; }
.tl-right span { display: block; }
.navigator, .workarea { border: solid #000; border-width: 1px 0; background: linear-gradient(90deg, var(--bg) 1px, var(--blue) 1px 6px, #000 6px 7px, transparent 7px calc(100% - 7px), #000 calc(100% - 7px) calc(100% - 6px), var(--blue) calc(100% - 6px) calc(100% - 1px), transparent 0); border-radius: 5px; }
.navigator { height: 10px; }
.navigator span { height: 8px; background: #666; }
.ruler { height: 19px; }
.scale { position: relative; height: 19px; }
.scale span { position: absolute; bottom: 1px; width: 1px; height: 5px; background: #888; }
.scale em { position: absolute; bottom: 5px; left: 0; transform: translateX(-50%); font-style: normal; }
.workarea { height: 18px; }
.workarea span { height: 16px; background: #606060; }
.cached span { height: 3px; background: #12bd22; border: 0; }
.lanes.lanes { display: flex; flex-direction: column; flex: 1; padding: 0; }
.lane { height: 17px; }
.lane.bar { background: #484848; }
.lane.bar span { height: 16px; background: linear-gradient(#a9b4ee 1px, #6a7edb 2px, #4359c8); border-left: 1px solid #a9b4ee; }
.lane.keys span { position: relative; height: 17px; background: #333; border-bottom: 1px solid #262626; }
.lane svg { position: absolute; top: 4px; margin-left: -4px; }
.empty { display: flex; flex: 1; }
.empty span { flex: 1; background: #333; }
.overlay { position: absolute; inset: 47px 0 0; pointer-events: none; }
.playhead { position: relative; width: 1px; height: 100%; background: var(--blue); }
.playhead svg { position: absolute; left: -6px; top: 0; }
.tl-edge { padding: 64px 0 0 4px; overflow: hidden; background: linear-gradient(90deg, #1a1a1a 1px, transparent 1px); }
.tl-edge svg + svg { margin-top: 6px; }
.tl-foot { grid-column: 1 / -1; display: flex; align-items: center; gap: 6px; padding: 0 0 1px 6px; }
.render { margin-left: 22px; width: 153px; }
.render b { margin-left: 2px; font-weight: 500; color: #50dca5; }
.toggle { width: 208px; height: 15px; border: 1px solid #303030; color: #999; line-height: 12px; }
.zoom { display: flex; align-items: center; gap: 10px; margin-left: 134px; }
.zoom input { appearance: none; width: 50px; height: 2px; background: #3c3c3c; margin: 0; }
.zoom input::-webkit-slider-thumb { appearance: none; width: 10px; height: 10px; border: 2px solid #b5b5b5; border-radius: 50%; background: var(--bg); }

/* Windows taskbar */
.taskbar { display: grid; grid-template-columns: minmax(0, 1fr) auto minmax(0, 1fr); align-items: center; height: 48px; background: #102a33; color: #fff; }
.apps, .tray { display: flex; align-items: center; }
.apps { padding-left: 10px; }
.task { position: relative; display: flex; align-items: center; justify-content: center; width: 44px; height: 40px; flex: none; }
.task.active { width: 40px; margin: 0 2px; border-radius: 4px; background: #213943; }
.task.active::after { content: ""; position: absolute; bottom: 1px; width: 16px; height: 3px; border-radius: 2px; background: #4cc2ff; }
.win-search { display: flex; align-items: center; gap: 9px; width: 220px; height: 32px; margin: 0 2px 0 3px; padding: 0 10px; border-radius: 16px; background: #33474f; border: 1px solid #3f525a; font-size: 13px; color: #e4e8ea; }
.tray { justify-content: flex-end; padding-right: 10px; }
.cloud { margin: 0 17px 0 18px; }
.lang { margin-right: 18px; }
.status { display: flex; align-items: center; gap: 6px; margin-right: 14px; }
.tray time { font-size: 12px; line-height: 15px; text-align: right; }
.badge { width: 16px; height: 16px; margin-left: 8px; border-radius: 50%; background: #4cc2ff; color: #123; text-align: center; font-size: 10px; line-height: 16px; }
```
